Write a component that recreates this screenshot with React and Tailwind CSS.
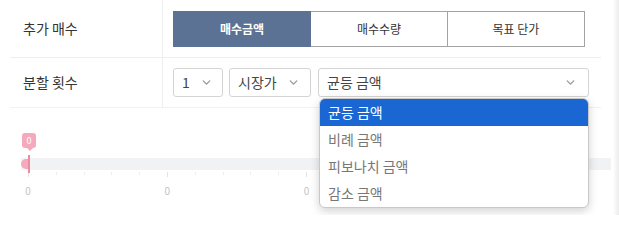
import { ChevronDown } from 'lucide-react';

const font = { fontFamily: '"Noto Sans CJK KR", "Noto Sans", sans-serif' };

function Select({ label, className, chevronClass = '' }) {
    return (
        <div className={`h-[29px] border border-[#d4d4d4] rounded-[3px] bg-white flex items-center justify-between pl-[8px] pr-[10px] text-[14px] text-[#444] ${className}`}>
            <span>{label}</span>
            <ChevronDown size={13} strokeWidth={2.5} className={`text-[#999] ${chevronClass}`} />
        </div>
    );
}

const options = ['균등 금액', '비례 금액', '피보나치 금액', '감소 금액'];

export default function App() {
    const ticks = Array.from({ length: 21 });

    return (
        <div className="w-[619px] h-[215px] bg-white flex overflow-hidden" style={font}>
            <div className="w-[613px] relative">
                {/* Form rows */}
                <div className="ml-[10px] w-[591px]">
                    <div className="flex h-[58px] border-b border-[#eeeeee]">
                        <div className="w-[153px] border-r border-[#eeeeee] flex items-center pl-[13px] text-[14px] text-[#333]">추가 매수</div>
                        <div className="flex-1 flex items-center pl-[10px]">
                            <div className="flex h-[36px] w-[412px]">
                                <div className="flex-1 bg-[#5b7294] border border-[#5b7294] flex items-center justify-center text-[12px] font-bold text-white">매수금액</div>
                                <div className="flex-1 border-y border-r border-[#a3a3a3] flex items-center justify-center text-[12px] text-[#333]">매수수량</div>
                                <div className="flex-1 border-y border-r border-[#a3a3a3] flex items-center justify-center text-[12px] text-[#333]">목표 단가</div>
                            </div>
                        </div>
                    </div>
                    <div className="flex h-[50px] border-b border-[#f2f2f2]">
                        <div className="w-[153px] border-r border-[#eeeeee] flex items-center pl-[13px] text-[14px] text-[#333]">분할 횟수</div>
                        <div className="flex-1 flex items-center pl-[10px]">
                            <Select label="1" className="w-[50px]" chevronClass="-mr-[1px]" />
                            <Select label="시장가" className="w-[82px] ml-[6px]" />
                            <div className="relative ml-[7px]">
                                <Select label="균등 금액" className="w-[271px]" chevronClass="mr-[1px]" />
                                {/* Open dropdown */}
                                <div className="absolute left-[1px] top-[30px] w-[270px] bg-white rounded-[6px] border border-[#c8c8c8] shadow-[0_3px_10px_rgba(0,0,0,0.18)] overflow-hidden z-10">
                                    {options.map((o, i) => (
                                        <div
                                            key={o}
                                            className={`h-[27px] flex items-center pl-[8px] text-[14px] ${i === 0 ? 'bg-[#1a66d2] text-white' : 'text-[#777]'}`}
                                        >
                                            {o}
                                        </div>
                                    ))}
                                </div>
                            </div>
                        </div>
                    </div>
                </div>

                {/* Slider */}
                <div className="ml-[21px] mt-[25px] w-[590px]">
                    <div className="relative h-[15px] w-[14px] ml-[1px] bg-[#f5a9bc] rounded-[3px] flex items-center justify-center text-[9px] text-white">
                        0
                        <div className="absolute -bottom-[3px] left-[5px] w-0 h-0 border-x-[3px] border-x-transparent border-t-[3px] border-t-[#f5a9bc]" />
                    </div>
                    <div className="relative mt-[10px] h-[12px] bg-[#f1f2f4]">
                        <div className="absolute left-0 top-[1px] w-[7px] h-[10px] bg-[#f5a9bc] rounded-l-full" />
                        <div className="absolute left-[7px] -top-[3px] w-[1.5px] h-[18px] bg-[#ef8aa3]" />
                    </div>
                    <div className="flex justify-between w-[557px] ml-[7px] mt-[2px]">
                        {ticks.map((_, i) => (
                            <div key={i} className={`w-px ${i % 5 === 0 ? 'h-[5px] bg-[#e4e4e4]' : 'h-[3px] bg-[#ececec]'}`} />
                        ))}
                    </div>
                    <div className="flex justify-between w-[571px] mt-[6px] text-[10px] text-[#c4c4c4]">
                        {[0, 0, 0, 0, 0].map((v, i) => (
                            <span key={i} className="w-[14px] text-center">{v}</span>
                        ))}
                    </div>
                </div>
            </div>
            <div className="w-[6px] bg-gradient-to-r from-white to-[#ececec]" />
        </div>
    );
}
